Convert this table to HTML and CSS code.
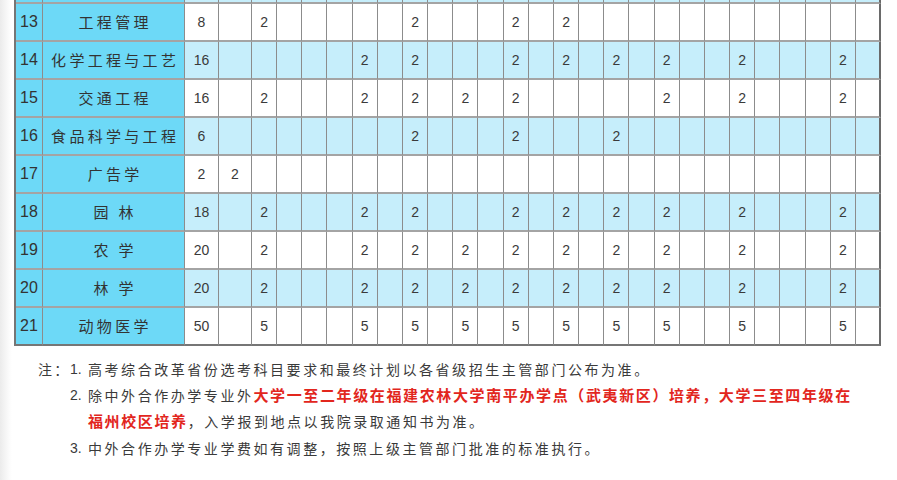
FILE: index.html
```html
<!DOCTYPE html>
<html lang="zh-CN">
<head>
<meta charset="utf-8">
<title>招生计划</title>
<link rel="stylesheet" href="styles.css">
</head>
<body>
<div class="page">
  <div class="plan">
    <div class="row alt"><span class="k n"></span><span class="k nm"></span><span></span><span></span><span></span><span></span><span></span><span></span><span></span><span></span><span></span><span></span><span></span><span></span><span></span><span></span><span></span><span></span><span></span><span></span><span></span><span></span><span></span><span></span><span></span><span></span><span></span><span></span><span></span></div>
    <div class="row"><span class="k n">13</span><span class="k nm">工程管理</span><span>8</span><span></span><span>2</span><span></span><span></span><span></span><span></span><span></span><span>2</span><span></span><span></span><span></span><span>2</span><span></span><span>2</span><span></span><span></span><span></span><span></span><span></span><span></span><span></span><span></span><span></span><span></span><span></span><span></span></div>
    <div class="row alt"><span class="k n">14</span><span class="k nm">化学工程与工艺</span><span>16</span><span></span><span></span><span></span><span></span><span></span><span>2</span><span></span><span>2</span><span></span><span></span><span></span><span>2</span><span></span><span>2</span><span></span><span>2</span><span></span><span>2</span><span></span><span></span><span>2</span><span></span><span></span><span></span><span>2</span><span></span></div>
    <div class="row"><span class="k n">15</span><span class="k nm">交通工程</span><span>16</span><span></span><span>2</span><span></span><span></span><span></span><span>2</span><span></span><span>2</span><span></span><span>2</span><span></span><span>2</span><span></span><span></span><span></span><span></span><span></span><span>2</span><span></span><span></span><span>2</span><span></span><span></span><span></span><span>2</span><span></span></div>
    <div class="row alt"><span class="k n">16</span><span class="k nm">食品科学与工程</span><span>6</span><span></span><span></span><span></span><span></span><span></span><span></span><span></span><span>2</span><span></span><span></span><span></span><span>2</span><span></span><span></span><span></span><span>2</span><span></span><span></span><span></span><span></span><span></span><span></span><span></span><span></span><span></span><span></span></div>
    <div class="row"><span class="k n">17</span><span class="k nm">广告学</span><span>2</span><span>2</span><span></span><span></span><span></span><span></span><span></span><span></span><span></span><span></span><span></span><span></span><span></span><span></span><span></span><span></span><span></span><span></span><span></span><span></span><span></span><span></span><span></span><span></span><span></span><span></span><span></span></div>
    <div class="row alt"><span class="k n">18</span><span class="k nm">园 林</span><span>18</span><span></span><span>2</span><span></span><span></span><span></span><span>2</span><span></span><span>2</span><span></span><span></span><span></span><span>2</span><span></span><span>2</span><span></span><span>2</span><span></span><span>2</span><span></span><span></span><span>2</span><span></span><span></span><span></span><span>2</span><span></span></div>
    <div class="row"><span class="k n">19</span><span class="k nm">农 学</span><span>20</span><span></span><span>2</span><span></span><span></span><span></span><span>2</span><span></span><span>2</span><span></span><span>2</span><span></span><span>2</span><span></span><span>2</span><span></span><span>2</span><span></span><span>2</span><span></span><span></span><span>2</span><span></span><span></span><span></span><span>2</span><span></span></div>
    <div class="row alt"><span class="k n">20</span><span class="k nm">林 学</span><span>20</span><span></span><span>2</span><span></span><span></span><span></span><span>2</span><span></span><span>2</span><span></span><span>2</span><span></span><span>2</span><span></span><span>2</span><span></span><span>2</span><span></span><span>2</span><span></span><span></span><span>2</span><span></span><span></span><span></span><span>2</span><span></span></div>
    <div class="row"><span class="k n">21</span><span class="k nm">动物医学</span><span>50</span><span></span><span>5</span><span></span><span></span><span></span><span>5</span><span></span><span>5</span><span></span><span>5</span><span></span><span>5</span><span></span><span>5</span><span></span><span>5</span><span></span><span>5</span><span></span><span></span><span>5</span><span></span><span></span><span></span><span>5</span><span></span></div>
  </div>

  <div class="notes">
    <div class="note-label">注：</div>
    <ol class="note-list">
      <li><span class="num">1.</span><span class="txt">高考综合改革省份选考科目要求和最终计划以各省级招生主管部门公布为准。</span></li>
      <li><span class="num">2.</span><span class="txt">除中外合作办学专业外<strong class="red">大学一至二年级在福建农林大学南平办学点（武夷新区）培养，大学三至四年级在<br>福州校区培养</strong>，入学报到地点以我院录取通知书为准。</span></li>
      <li class="gap"><span class="num">3.</span><span class="txt">中外合作办学专业学费如有调整，按照上级主管部门批准的标准执行。</span></li>
    </ol>
  </div>
</div>
</body>
</html>
```

FILE: styles.css
```css
html, body {
  margin: 0;
  padding: 0;
}

body {
  width: 897px;
  height: 480px;
  overflow: hidden;
  background: linear-gradient(90deg, #ebebeb 0, #f4f4f4 5px, #fbfbfb 9px, #ffffff 12px);
  font-family: "Liberation Sans", "Noto Sans CJK SC", sans-serif;
  color: #333;
}

.page {
  padding-left: 14px;
}

.plan {
  width: 867px;
  box-sizing: border-box;
  margin-top: -34px;
  border-left: 2px solid #767676;
}

.row {
  display: grid;
  grid-template-columns: 27px 142px 34px 33px repeat(24, minmax(0, 1fr)) 25px;
}

.row > span {
  display: block;
  height: 38px;
  box-sizing: border-box;
  border-right: 1px solid #8c8c8c;
  border-bottom: 2px solid #a4a4a4;
  background: #ffffff;
  line-height: 36px;
  text-align: center;
  font-size: 14px;
  color: #3a3a3a;
  white-space: nowrap;
  overflow: hidden;
}

.row.alt > span {
  background: #c6eefb;
}

.row > span.k,
.row.alt > span.k {
  background: #6dd9f7;
}

.row > span.n {
  font-size: 16px;
  color: #333;
}

.row > span.nm {
  font-family: "Noto Sans CJK SC", sans-serif;
  font-size: 15px;
  letter-spacing: 3.3px;
  text-indent: 3.3px;
  color: #333;
}

.row > span:last-child {
  border-right: 2px solid #6a6a6a;
}

.row:last-child > span {
  border-bottom-color: #767676;
}

.notes {
  display: flex;
  margin-top: 10px;
  padding-left: 24px;
  font-family: "Noto Sans CJK SC", sans-serif;
  font-size: 14px;
  line-height: 26px;
  letter-spacing: 2.55px;
  color: #3a3a3a;
}

.note-label {
  width: 32px;
  flex: none;
  white-space: nowrap;
  letter-spacing: 2.3px;
}

.note-list {
  list-style: none;
  margin: 0;
  padding: 0;
}

.note-list li {
  display: flex;
}

.note-list li.gap {
  margin-top: 1px;
}

.num {
  width: 18px;
  flex: none;
  font-family: "Liberation Sans", sans-serif;
  letter-spacing: 0;
}

.txt {
  white-space: nowrap;
}

.red {
  color: #e2261d;
  font-weight: bold;
  font-size: 15px;
  letter-spacing: 1.62px;
}
```
